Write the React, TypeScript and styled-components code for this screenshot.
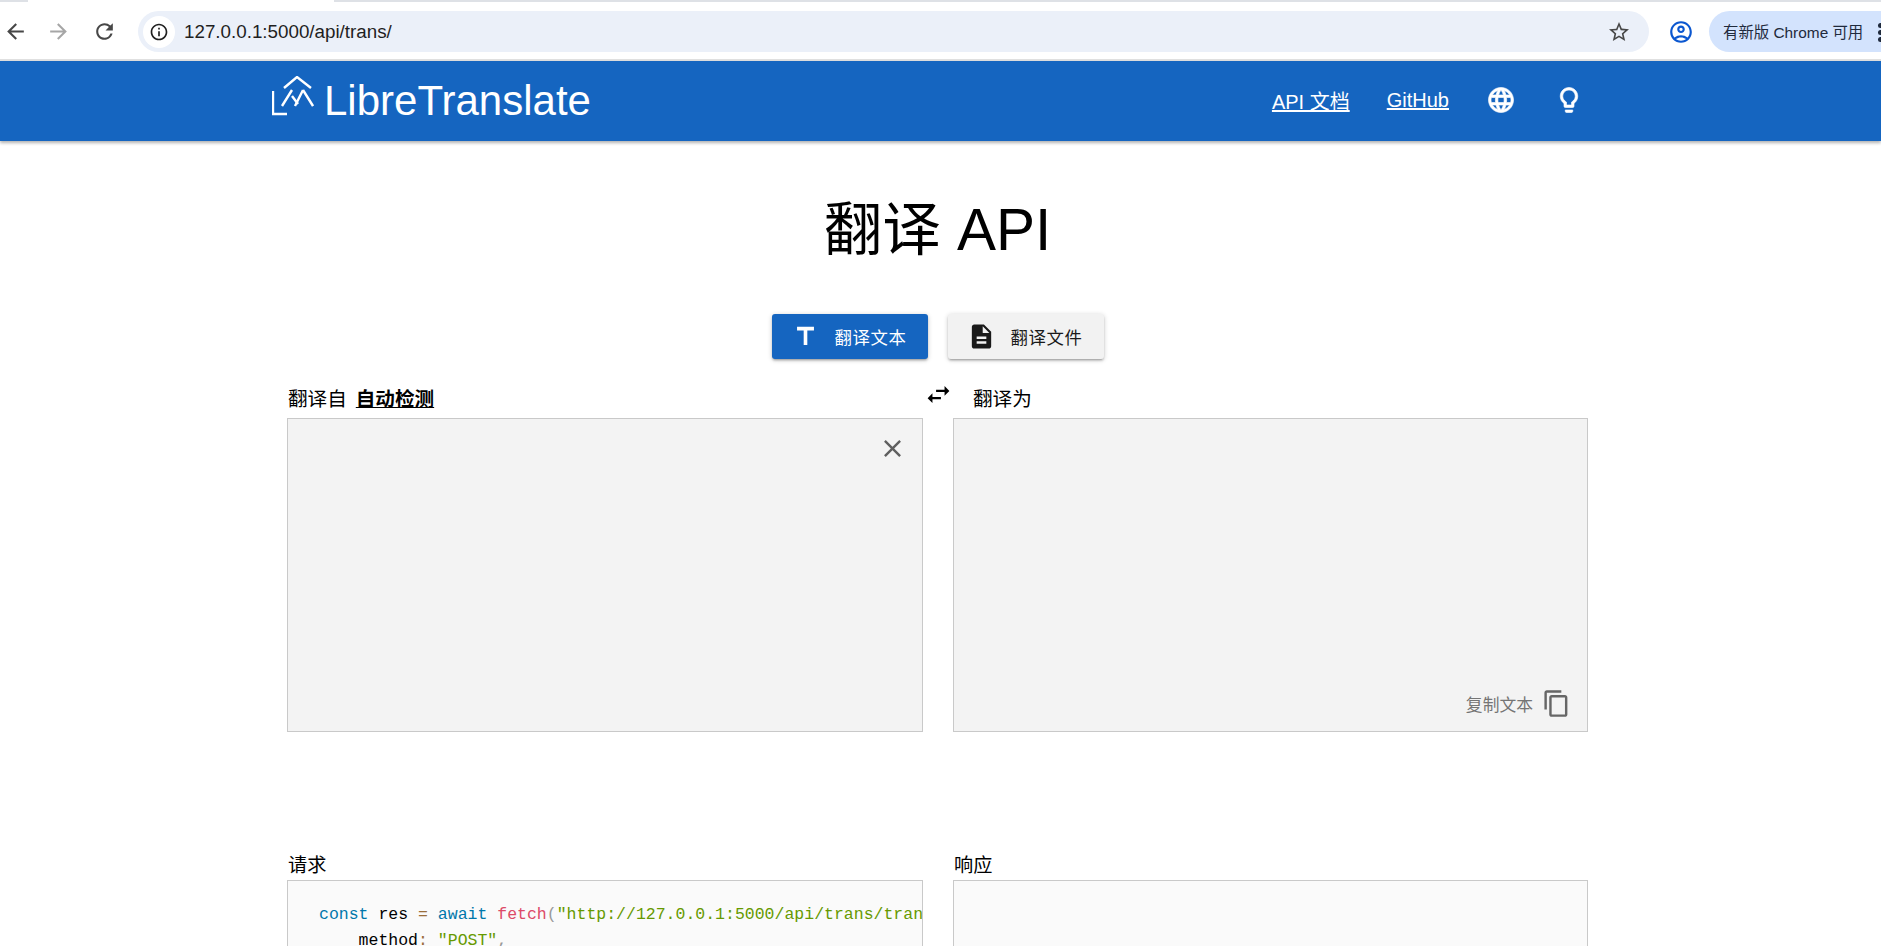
import React from "react";
import styled, { createGlobalStyle } from "styled-components";
import {
  MdArrowBack, MdArrowForward, MdRefresh, MdInfoOutline, MdStarBorder, MdOutlineAccountCircle,
  MdLanguage, MdLightbulbOutline, MdSwapHoriz, MdDescription, MdClose, MdContentCopy, MdTitle,
} from "react-icons/md";

const Global = createGlobalStyle`
  html, body { margin: 0; padding: 0; height: 100%; overflow: hidden; background: #fff; }
  body { font-family: "Liberation Sans", "Noto Sans CJK SC", sans-serif; color: #000; }
  * { box-sizing: border-box; }
`;

const Page = styled.div`height: 946px; overflow: hidden; display: flex; flex-direction: column;`;
const TabStrip = styled.div`height: 2px; background: #dee1e6; flex: none; padding-left: 28px;`;
const ActiveTab = styled.div`height: 2px; width: 306px; background: #fff;`;
const Toolbar = styled.div`
  height: 59px; flex: none; background: #fff; border-bottom: 2px solid #e0e0e0;
  display: flex; align-items: center; padding: 2px 0 0 0; position: relative;
`;
const NavBtn = styled.span<{ $c: string; $w: number }>`
  width: ${p => p.$w}px; display: flex; justify-content: center; color: ${p => p.$c}; font-size: 25px; flex: none;
`;
const Omnibox = styled.div`
  width: 1511px; height: 41px; background: #ebf0f9; border-radius: 21px; margin-left: 16px; flex: none;
  display: flex; align-items: center; padding: 0 13px 0 5px;
`;
const InfoBadge = styled.span`
  width: 32px; height: 32px; border-radius: 50%; background: #fff; display: flex; align-items: center;
  justify-content: center; font-size: 20px; color: #1f1f1f; flex: none;
`;
const Url = styled.span`
  font: 18.8px "Liberation Sans", sans-serif; color: #1f1f1f; margin-left: 9px; flex: 1;
`;
const Star = styled.span`font-size: 24px; color: #474747; display: flex; margin-right: 5px;`;
const Profile = styled.span`font-size: 26px; color: #0b57d0; display: flex; margin-left: 19px; flex: none;`;
const UpdatePill = styled.div`
  margin-left: 15px; flex: 1; height: 41px; background: #d3e3fd; border-radius: 21px 0 0 21px;
  display: flex; align-items: center; padding: 0 0 2px 14px; font: 15.4px "Liberation Sans", "Noto Sans CJK SC", sans-serif;
  color: #1f2a3c; white-space: nowrap; overflow: hidden; position: relative;
`;
const Kebab = styled.span`
  position: absolute; right: -2px; top: 12px; width: 5px; height: 5px; border-radius: 50%; background: #1f2a3c;
  box-shadow: 0 7px 0 #1f2a3c, 0 14px 0 #1f2a3c;
`;

const Header = styled.header`
  height: 80px; flex: none; background: #1565c0; color: #fff; position: relative;
  box-shadow: 0 2px 3px rgba(0,0,0,.3); display: flex; align-items: center; padding-left: 272px; z-index: 1;
`;
const Brand = styled.div`display: flex; align-items: center; font-size: 42px; gap: 10px; line-height: 1;`;
const LogoMark = styled.svg`
  width: 42px; height: 40px; margin-bottom: 10px; fill: none; stroke: #fff; stroke-width: 2.4; flex: none;
`;
const Nav = styled.nav`
  margin-left: 681px; display: flex; align-items: center; font-size: 20px; padding-bottom: 2px;
`;
const NavLink = styled.a<{ $ml: number }>`
  color: #fff; text-decoration: underline; margin-left: ${p => p.$ml}px; white-space: nowrap;
`;
const NavIcon = styled.span<{ $ml: number }>`
  display: flex; font-size: 30px; margin-left: ${p => p.$ml}px;
  svg path:not([fill="none"]) { stroke: currentColor; stroke-width: .5; }
`;

const Main = styled.main`width: 1301px; margin-left: 287px; display: flex; flex-direction: column;`;
const Title = styled.h1`
  font-size: 58.5px; font-weight: 400; line-height: 68px; margin: 55px 0 0; text-align: center;
`;
const Tabs = styled.div`display: flex; justify-content: center; gap: 20px; margin-top: 50px;`;
const TabBtn = styled.div<{ $active?: boolean }>`
  width: 156px; height: 45px; border-radius: 3px; display: flex; align-items: center; padding-left: 23px;
  background: ${p => (p.$active ? "#1565c0" : "#f2f2f2")}; color: ${p => (p.$active ? "#fff" : "#1a1a1a")};
  font-size: 17.4px; letter-spacing: .6px;
  box-shadow: 0 2px 2px rgba(0,0,0,.14), 0 3px 1px -2px rgba(0,0,0,.12), 0 1px 5px rgba(0,0,0,.2);
`;
const TabIcon = styled.span`display: flex; font-size: 29px; margin-right: 15px; margin-left: -4px;`;
const LabelRow = styled.div`
  display: grid; grid-template-columns: 636px 30px 635px; align-items: start; height: 35px; margin-top: 24px;
  font-size: 19.6px; line-height: 30px; padding: 1px 0 0 1px;
`;
const Strong = styled.span`font-weight: 700; text-decoration: underline; margin-left: 9px;`;
const Swap = styled.span`display: flex; justify-content: center; font-size: 29px; margin-top: -4px; margin-left: -2px;`;
const RightLabel = styled.span`padding-left: 19px;`;
const Panels = styled.div`display: grid; grid-template-columns: 636px 635px; column-gap: 30px;`;
const Box = styled.div`
  height: 314px; background: #f3f3f3; border: 1.2px solid #c9c9c9; position: relative;
`;
const CloseBtn = styled.span`position: absolute; right: 15px; top: 15px; font-size: 29px; color: #5f5f5f; display: flex;`;
const CopyRow = styled.div`
  position: absolute; right: 16px; bottom: 13px; display: flex; align-items: center; gap: 9px; font-size: 16.8px; color: #757575;
`;
const CopyIcon = styled.span`display: flex; font-size: 29px; color: #666;`;
const ApiLabels = styled.div`
  display: grid; grid-template-columns: 636px 635px; column-gap: 30px; margin-top: 116px; font-size: 19.2px; height: 32px;
  align-items: center; padding-left: 1px;
`;
const CodeBox = styled.div`
  height: 200px; background: #fafafa; border: 1.2px solid #c9c9c9; overflow: hidden; padding: 21px 0 0 31px;
`;
const Code = styled.pre`
  margin: 0; font: 16.5px/26.4px "Liberation Mono", monospace; color: #000; white-space: pre;
`;
const Kw = styled.span`color: #0077aa;`;
const Op = styled.span`color: #9a6e3a;`;
const Fn = styled.span`color: #dd4a68;`;
const Pn = styled.span`color: #999;`;
const Str = styled.span`color: #669900;`;

const Logo = () => (
  <LogoMark viewBox="0 0 42 40">
    <path d="M1 15V38H15" />
    <path d="M12 12L25 1L39 12" />
    <path d="M20 14L10 30M20 20L26 28" />
    <path d="M31 14L23 30M31 14L41 30" />
  </LogoMark>
);

export default function App() {
  return (
    <Page>
      <Global />
      <TabStrip><ActiveTab /></TabStrip>
      <Toolbar>
        <NavBtn $c="#474747" $w={30}><MdArrowBack /></NavBtn>
        <NavBtn $c="#a6a6a6" $w={56}><MdArrowForward /></NavBtn>
        <NavBtn $c="#474747" $w={36}><MdRefresh /></NavBtn>
        <Omnibox>
          <InfoBadge><MdInfoOutline /></InfoBadge>
          <Url>127.0.0.1:5000/api/trans/</Url>
          <Star><MdStarBorder /></Star>
        </Omnibox>
        <Profile><MdOutlineAccountCircle /></Profile>
        <UpdatePill>有新版 Chrome 可用<Kebab /></UpdatePill>
      </Toolbar>
      <Header>
        <Brand><Logo />LibreTranslate</Brand>
        <Nav>
          <NavLink $ml={0}>API 文档</NavLink>
          <NavLink $ml={37}>GitHub</NavLink>
          <NavIcon $ml={37}><MdLanguage /></NavIcon>
          <NavIcon $ml={38}><MdLightbulbOutline /></NavIcon>
        </Nav>
      </Header>
      <Main>
        <Title>翻译 API</Title>
        <Tabs>
          <TabBtn $active><TabIcon><MdTitle /></TabIcon>翻译文本</TabBtn>
          <TabBtn><TabIcon><MdDescription /></TabIcon>翻译文件</TabBtn>
        </Tabs>
        <LabelRow>
          <span>翻译自<Strong>自动检测</Strong></span>
          <Swap><MdSwapHoriz /></Swap>
          <RightLabel>翻译为</RightLabel>
        </LabelRow>
        <Panels>
          <Box><CloseBtn><MdClose /></CloseBtn></Box>
          <Box>
            <CopyRow>复制文本<CopyIcon><MdContentCopy /></CopyIcon></CopyRow>
          </Box>
        </Panels>
        <ApiLabels><span>请求</span><span>响应</span></ApiLabels>
        <Panels>
          <CodeBox>
            <Code>
              <Kw>const</Kw> res <Op>=</Op> <Kw>await</Kw> <Fn>fetch</Fn><Pn>(</Pn><Str>"http://127.0.0.1:5000/api/trans/translate"</Str><Pn>,</Pn> <Pn>{"{"}</Pn>{"\n"}
              {"    "}method<Op>:</Op> <Str>"POST"</Str><Pn>,</Pn>
            </Code>
          </CodeBox>
          <CodeBox />
        </Panels>
      </Main>
    </Page>
  );
}
